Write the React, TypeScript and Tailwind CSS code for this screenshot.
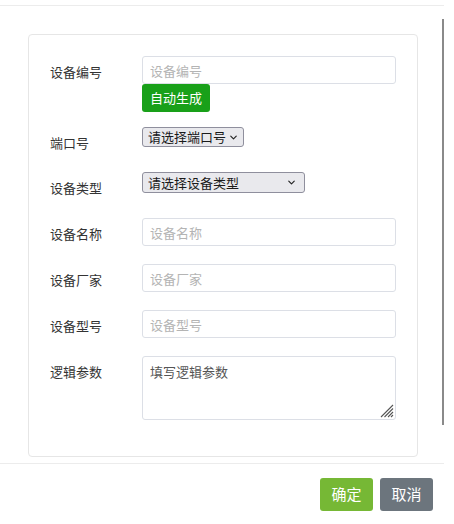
import { ChevronDown } from 'lucide-react';

const font = { fontFamily: '"Noto Sans CJK SC", "Noto Sans", sans-serif' };

function Label({ text }: { text: string }) {
  return <div className="w-[92px] shrink-0 pt-[6px] text-[13px] leading-5 text-[#333]">{text}</div>;
}

const inputClass =
  'w-[254px] h-[28px] px-[7px] text-[13px] text-[#333] border border-[#dcdfe6] rounded-[3px] outline-none bg-white placeholder-[#b4b4b4]';

export default function App() {
  return (
    <div className="relative w-[454px] h-[524px] bg-white" style={font}>
      <div className="pt-[5px]">
        {/* body */}
        <div className="relative w-[444px] h-[459px] border-y border-[#ececec]">
          <div className="absolute left-[442px] top-[13px] w-[2px] h-[406px] bg-[#8a8a8a]" />
          <div className="ml-[28px] mt-[28px] w-[390px] h-[423px] border border-[#e6e6e6] rounded-[4px] px-[21px] pt-[21px]">
            <div className="flex items-start">
              <Label text="设备编号" />
              <div className="flex flex-col items-start">
                <input className={inputClass} placeholder="设备编号" />
                <button className="h-[28px] px-[8px] bg-[#19a019] text-white text-[13px] rounded-[3px]">自动生成</button>
              </div>
            </div>

            <div className="flex items-start mt-[15px]">
              <Label text="端口号" />
              <div className="relative">
                <select className="block appearance-none w-[102px] h-[20px] pl-[5px] text-[13px] leading-[18px] text-[#1a1a1a] bg-[#e9e9ed] border border-[#8f8f9d] rounded-[3px] outline-none">
                  <option>请选择端口号</option>
                </select>
                <ChevronDown size={11} strokeWidth={2.5} className="absolute right-[5px] top-[5px] text-[#222] pointer-events-none" />
              </div>
            </div>

            <div className="flex items-start mt-[19px]">
              <Label text="设备类型" />
              <div className="relative">
                <select className="block appearance-none w-[163px] h-[21px] pl-[5px] text-[13px] leading-[19px] text-[#1a1a1a] bg-[#e9e9ed] border border-[#8f8f9d] rounded-[3px] outline-none">
                  <option>请选择设备类型</option>
                </select>
                <ChevronDown size={11} strokeWidth={2.5} className="absolute right-[8px] top-[5px] text-[#222] pointer-events-none" />
              </div>
            </div>

            <div className="flex items-start mt-[20px]">
              <Label text="设备名称" />
              <input className={inputClass} placeholder="设备名称" />
            </div>

            <div className="flex items-start mt-[18px]">
              <Label text="设备厂家" />
              <input className={inputClass} placeholder="设备厂家" />
            </div>

            <div className="flex items-start mt-[18px]">
              <Label text="设备型号" />
              <input className={inputClass} placeholder="设备型号" />
            </div>

            <div className="flex items-start mt-[18px]">
              <Label text="逻辑参数" />
              <div className="relative">
                <textarea
                  className="block w-[254px] h-[64px] px-[7px] py-[5px] text-[13px] leading-5 text-[#333] border border-[#dcdfe6] rounded-[3px] outline-none resize-none placeholder-[#555]"
                  placeholder="填写逻辑参数"
                />
                <svg className="absolute right-[2px] bottom-[2px] pointer-events-none" width="15" height="15" viewBox="0 0 15 15">
                  <g stroke="#555" strokeWidth="1.1">
                    <line x1="14" y1="2" x2="2" y2="14" />
                    <line x1="14" y1="5.5" x2="5.5" y2="14" />
                    <line x1="14" y1="9" x2="9" y2="14" />
                    <line x1="14" y1="12" x2="12" y2="14" />
                  </g>
                </svg>
              </div>
            </div>
          </div>
        </div>

        {/* footer */}
        <div className="w-[444px] flex justify-end gap-[7px] pr-[11px] pt-[14px]">
          <button className="w-[53px] h-[33px] bg-[#76b835] text-white text-[15px] rounded-[3px]">确定</button>
          <button className="w-[53px] h-[33px] bg-[#6c757d] text-white text-[15px] rounded-[3px]">取消</button>
        </div>
      </div>
    </div>
  );
}
